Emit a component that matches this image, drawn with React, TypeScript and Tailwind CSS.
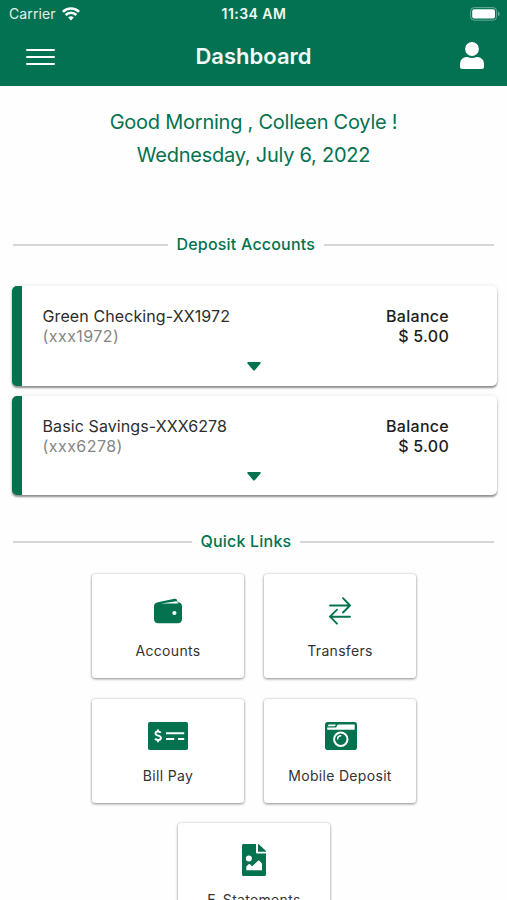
import type { ReactNode } from "react";

function WifiIcon() {
  return (
    <svg className="ml-[6px] h-[14px] w-[18px]" viewBox="0 0 18 14" fill="none" stroke="white" strokeWidth="2.6">
      <path d="M0.9 4.900a11.5 11.5 0 0 1 16.2 0" />
      <path d="M3.700 8a7.500 7.500 0 0 1 10.600 0" />
      <path d="M9 13.400 6.200 10.600a4 4 0 0 1 5.600 0Z" fill="white" stroke="none" />
    </svg>
  );
}

function BatteryIcon() {
  return (
    <svg className="h-[14px] w-[30px]" viewBox="0 0 30 14">
      <rect x="0.6" y="0.6" width="26" height="12.6" rx="3.6" fill="none" stroke="#6aab96" strokeWidth="1" />
      <rect x="2.2" y="2.2" width="22.8" height="9.4" rx="2" fill="white" />
      <path d="M28 4.8c1.2.4 1.7 1.2 1.7 2.1S29.2 8.600 28 9Z" fill="#6aab96" />
    </svg>
  );
}

function UserIcon() {
  return (
    <svg className="h-[28px] w-[24px]" viewBox="0 0 24 28" fill="white">
      <circle cx="12" cy="7" r="6.9" />
      <path d="M6.500 15h1c2.800 1.300 6.200 1.300 9 0h1A6.500 6.500 0 0 1 24 21.500V24.500a2.500 2.500 0 0 1-2.500 2.500h-19A2.500 2.500 0 0 1 0 24.500V21.500A6.500 6.500 0 0 1 6.500 15Z" />
    </svg>
  );
}

function WalletIcon() {
  return (
    <svg className="h-[26px] w-[28px]" viewBox="0 0 28 26">
      <path d="M4 4.200 20.300 0.800c1.900-.4 3 .6 3.200 3.400C26.300 4.300 28 5.600 28 8.200v12.800c0 2.800-1.600 4.300-4.300 4.300H4.300C1.600 25.300 0 23.800 0 21V8.500C0 5.900 1.500 4.600 4 4.200Z" fill="#04724f" />
      <path d="M7 5.500 22.500 3.300c.5.200.7.700.7 1.300H24v.8H7Z" fill="white" />
      <circle cx="20.400" cy="15" r="2.100" fill="white" />
    </svg>
  );
}

function TransferIcon() {
  return (
    <svg className="h-[28px] w-[22px]" viewBox="0 0 22 28" fill="none" stroke="#04724f" strokeWidth="1.900" strokeLinecap="round" strokeLinejoin="round">
      <path d="M1 8.500h20M14 1.200l7 7.300-7 7" />
      <path d="M21 19.700H1M8 12.700l-7 7 7 7" />
    </svg>
  );
}

function CheckIcon() {
  return (
    <svg className="mr-px h-[28px] w-[40px]" viewBox="0 0 40 28">
      <rect width="40" height="28" rx="1.800" fill="#04724f" />
      <g fill="none" stroke="white">
        <path d="M12.700 10.700c-.6-.9-1.600-1.200-2.700-1.200-1.500 0-2.500.7-2.500 2 0 2.900 5.400 1.500 5.400 4.400 0 1.400-1.100 2.100-2.800 2.100-1.300 0-2.400-.5-3-1.400M10 7.500v2M10 18v2.200" strokeWidth="1.900" />
        <path d="M18 11.200h18.200M18 17h8.200M30 17h6.200" strokeWidth="2.100" />
      </g>
    </svg>
  );
}

function CameraIcon() {
  return (
    <svg className="ml-px h-[28px] w-[32px]" viewBox="0 0 32 28">
      <rect width="32" height="28" rx="2.800" fill="#04724f" />
      <path d="M2.200 5.600h8.300c1.400 0 1.200-3.200 2.800-3.200h16.400v5.400H2.200Z" fill="white" />
      <path d="M3.700 2.400h7.300l-1.200 1.800H2.600Z" fill="white" />
      <circle cx="15.800" cy="17.300" r="6.700" fill="none" stroke="white" strokeWidth="2" />
      <path d="M12.600 17c0-2 1.300-3.200 3.200-3.200" fill="none" stroke="white" strokeWidth="1.500" strokeLinecap="round" />
    </svg>
  );
}

function StatementIcon() {
  return (
    <svg className="h-[32px] w-[24px]" viewBox="0 0 24 32">
      <path d="M1.500 0H14v8c0 1 .6 1.600 1.600 1.600H24v20.900c0 .9-.6 1.500-1.500 1.500h-21C.6 32 0 31.400 0 30.500v-29C0 .6.6 0 1.500 0Z" fill="#04724f" />
      <path d="M16 0c.5 0 .8.200 1.100.5l6.400 6.100c.3.300.5.600.5 1.100H16Z" fill="#04724f" />
      <circle cx="6.900" cy="14.500" r="3" fill="white" />
      <path d="M4.300 26.200v-3.700l2.400-2.200c.4-.4.900-.4 1.300 0l2.200 2 5.900-5.500c.4-.4.900-.4 1.300 0l2.600 2.600v6.800Z" fill="white" />
    </svg>
  );
}

function Divider({ children, line }: { children: ReactNode; line: string }) {
  return (
    <div className="flex h-[24px] items-center px-[13px] text-[16px] font-medium tracking-[0.200px] text-[#04724f]">
      <span className={`mt-[2px] h-[2px] shrink-0 bg-[#d6d6d8] ${line}`} />
      <span className="flex-none whitespace-nowrap px-[8.500px]">{children}</span>
      <span className="mt-[2px] h-[2px] grow bg-[#d6d6d8]" />
    </div>
  );
}

function AccountCard({ name, mask }: { name: string; mask: string }) {
  return (
    <section className="flex h-[99.500px] flex-col rounded-[5px] border-l-[10px] border-[#04724f] bg-white pt-[20px] shadow-[0_2px_2px_rgba(0,0,0,0.42),0_0_4px_rgba(0,0,0,0.1)]">
      <div className="flex justify-between pl-[21px] pr-[48px] text-[16px] leading-[20px]">
        <div className="whitespace-nowrap">
          <p className="tracking-[0.100px] text-[#2d2d2d]">{name}</p>
          <p className="tracking-[0.450px] text-[#858585]">{mask}</p>
        </div>
        <div className="text-right font-medium tracking-[0.280px] text-[#1d1d1d]">
          <p>Balance</p>
          <p>$ 5.00</p>
        </div>
      </div>
      <svg className="mt-[16px] ml-[225.500px] h-[9px] w-[14px]" viewBox="0 0 14 9" fill="#04724f">
        <path d="M1.200 0h11.600c1 0 1.300.8.700 1.500L8 8c-.6.700-1.400.7-2 0L.5 1.500C-.1.800.2 0 1.200 0Z" />
      </svg>
    </section>
  );
}

function LinkCard({ icon, label }: { icon: ReactNode; label: string }) {
  return (
    <div className="flex h-[104px] w-[152px] flex-col items-center rounded-[3px] bg-white shadow-[0_1px_3px_rgba(0,0,0,0.42),0_0_2px_rgba(0,0,0,0.15)]">
      <div className="mt-[19px] flex h-[36px] items-center justify-center">{icon}</div>
      <span className="mt-[12px] text-[14px] leading-[20px] tracking-[0.320px] whitespace-nowrap text-[#333]">{label}</span>
    </div>
  );
}

export default function App() {
  return (
    <div className="flex h-[900px] w-[507px] flex-col overflow-hidden bg-[#fefefe] font-[Inter,sans-serif]">
      <header className="h-[86px] shrink-0 bg-[#027253] text-white">
        <div className="grid h-[27px] grid-cols-3 items-center pl-[8px] pr-[7px] text-[14px]">
          <div className="flex items-center pl-px text-[#e3f1ec]">
            <span className="tracking-[0.100px]">Carrier</span>
            <WifiIcon />
          </div>
          <span className="text-center text-[14px] font-semibold tracking-[0.450px] whitespace-nowrap text-[#eef7f4]">11:34 AM</span>
          <div className="flex justify-end"><BatteryIcon /></div>
        </div>
        <div className="grid h-[58px] grid-cols-[60px_1fr_60px] items-center">
          <div className="ml-[26px] mt-px flex w-[29px] flex-col gap-[5px]">
            <span className="h-[2px] rounded-full bg-white" />
            <span className="h-[2px] rounded-full bg-white" />
            <span className="h-[2px] rounded-full bg-white" />
          </div>
          <h1 className="text-center text-[22px] font-semibold text-[#f3faf7]">Dashboard</h1>
          <div className="pl-[13px]"><UserIcon /></div>
        </div>
      </header>

      <div className="mt-[20px] shrink-0 text-center text-[20px] leading-[33px] tracking-[-0.240px] text-[#04724f]">
        <p>Good Morning , Colleen Coyle !</p>
        <p>Wednesday, July 6, 2022</p>
      </div>

      <div className="mt-[60px] shrink-0"><Divider line="w-[155px]">Deposit Accounts</Divider></div>

      <main className="mt-[30px] flex shrink-0 flex-col gap-[10px] pl-[11.500px] pr-[10px]">
        <AccountCard name="Green Checking-XX1972" mask="(xxx1972)" />
        <AccountCard name="Basic Savings-XXX6278" mask="(xxx6278)" />
      </main>

      <div className="mt-[34px] shrink-0"><Divider line="w-[179px]">Quick Links</Divider></div>

      <nav className="mt-[21px] flex shrink-0 flex-wrap justify-center gap-x-[20px] gap-y-[20.500px] pl-[61px] pr-[60px]">
        <LinkCard icon={<WalletIcon />} label="Accounts" />
        <LinkCard icon={<TransferIcon />} label="Transfers" />
        <LinkCard icon={<CheckIcon />} label="Bill Pay" />
        <LinkCard icon={<CameraIcon />} label="Mobile Deposit" />
        <LinkCard icon={<StatementIcon />} label="E-Statements" />
      </nav>
    </div>
  );
}
